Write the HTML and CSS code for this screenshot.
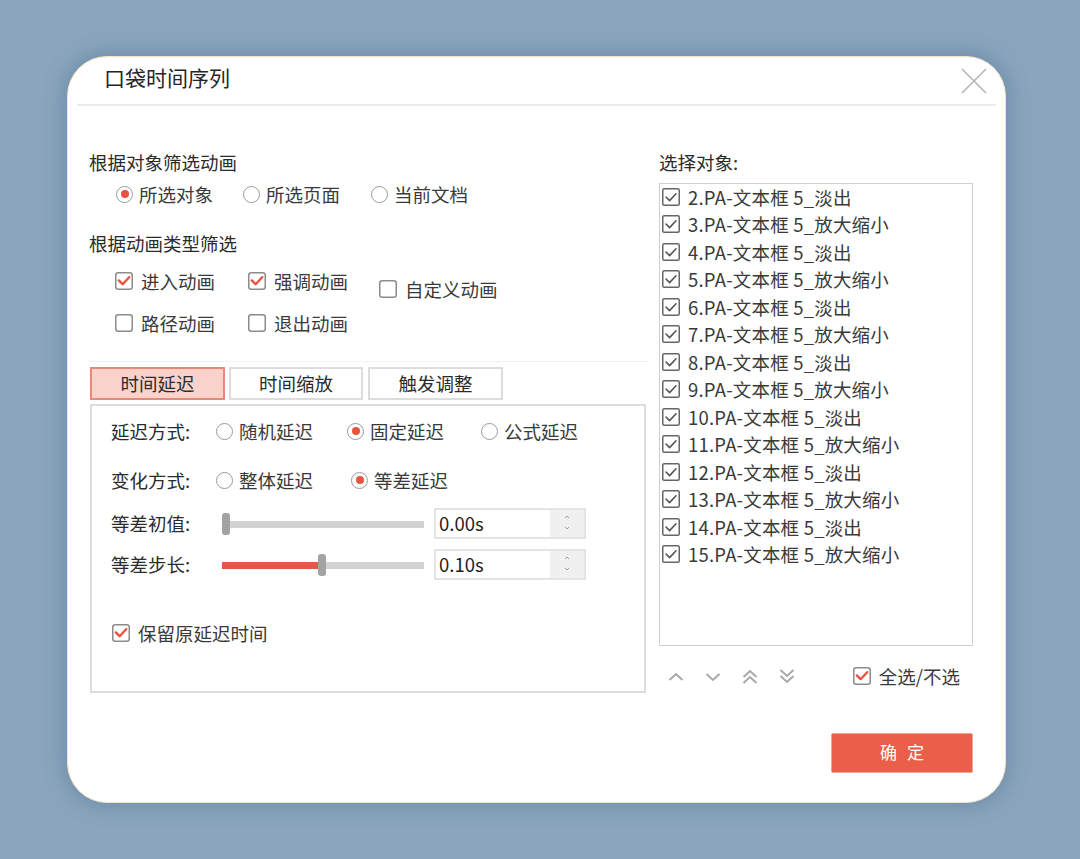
FILE: index.html
```html
<!DOCTYPE html>
<html lang="zh-CN">
<head>
<meta charset="utf-8">
<title>口袋时间序列</title>
<link rel="stylesheet" href="styles.css">
</head>
<body>
<svg class="defs" width="0" height="0" aria-hidden="true">
  <defs>
    <symbol id="cb-red" viewBox="0 0 18 18">
      <rect x="0.75" y="0.75" width="16.5" height="16.5" rx="2.5" fill="#fff" stroke="#8c8c8c" stroke-width="1.5"/>
      <polyline points="3.8,8.4 7.6,12.2 14.2,5.2" fill="none" stroke="#e8533f" stroke-width="2.4" stroke-linecap="round" stroke-linejoin="round"/>
    </symbol>
    <symbol id="cb-off" viewBox="0 0 18 18">
      <rect x="0.75" y="0.75" width="16.5" height="16.5" rx="2.5" fill="#fff" stroke="#8c8c8c" stroke-width="1.5"/>
    </symbol>
    <symbol id="cb-gray" viewBox="0 0 18 18">
      <rect x="0.75" y="0.75" width="16.5" height="16.5" rx="1.5" fill="#fff" stroke="#666" stroke-width="1.5"/>
      <polyline points="4,9 7.6,12.6 14,5.8" fill="none" stroke="#555" stroke-width="1.6" stroke-linecap="round" stroke-linejoin="round"/>
    </symbol>
  </defs>
</svg>

<div class="stage">
  <div class="dialog">
    <div class="header">
      <span class="title">口袋时间序列</span>
      <svg class="close" width="26" height="26" viewBox="0 0 26 26"><path d="M1 1 L25 25 M25 1 L1 25" stroke="#b4b4b4" stroke-width="1.6" fill="none"/></svg>
    </div>

    <div class="content">
      <div class="left">
        <div class="sec">根据对象筛选动画</div>
        <div class="row indent-r">
          <label class="opt w127"><span class="radio on"></span>所选对象</label>
          <label class="opt w128"><span class="radio"></span>所选页面</label>
          <label class="opt"><span class="radio"></span>当前文档</label>
        </div>

        <div class="sec sec2">根据动画类型筛选</div>
        <div class="row indent-c row-c1">
          <label class="opt w133"><svg class="cb"><use href="#cb-red"/></svg>进入动画</label>
          <label class="opt w131"><svg class="cb"><use href="#cb-red"/></svg>强调动画</label>
          <label class="opt low"><svg class="cb"><use href="#cb-off"/></svg>自定义动画</label>
        </div>
        <div class="row indent-c row-c2">
          <label class="opt w133"><svg class="cb"><use href="#cb-off"/></svg>路径动画</label>
          <label class="opt w131"><svg class="cb"><use href="#cb-off"/></svg>退出动画</label>
        </div>

        <div class="divider"></div>

        <div class="tabs">
          <div class="tab active">时间延迟</div>
          <div class="tab t2">时间缩放</div>
          <div class="tab t3">触发调整</div>
        </div>

        <div class="panel">
          <div class="prow">
            <span class="plabel">延迟方式:</span>
            <label class="opt w131"><span class="radio"></span>随机延迟</label>
            <label class="opt w134"><span class="radio on"></span>固定延迟</label>
            <label class="opt"><span class="radio"></span>公式延迟</label>
          </div>
          <div class="prow prow2">
            <span class="plabel">变化方式:</span>
            <label class="opt w135"><span class="radio"></span>整体延迟</label>
            <label class="opt"><span class="radio on"></span>等差延迟</label>
          </div>

          <div class="srow srow1">
            <span class="slabel">等差初值:</span>
            <div class="slider">
              <div class="fill" style="width:0px"></div>
              <div class="thumb"></div>
            </div>
            <div class="spin">
              <span class="val">0.00s</span>
              <span class="spinbtns">
                <svg width="8" height="5" viewBox="0 0 8 5"><path d="M2 4 L4 2 L6 4" stroke="#a0a0a0" stroke-width="1" fill="none"/></svg>
                <svg width="8" height="5" viewBox="0 0 8 5"><path d="M2 1 L4 3 L6 1" stroke="#a0a0a0" stroke-width="1" fill="none"/></svg>
              </span>
            </div>
          </div>
          <div class="srow srow2">
            <span class="slabel">等差步长:</span>
            <div class="slider">
              <div class="fill" style="width:96px"></div>
              <div class="thumb"></div>
            </div>
            <div class="spin">
              <span class="val">0.10s</span>
              <span class="spinbtns">
                <svg width="8" height="5" viewBox="0 0 8 5"><path d="M2 4 L4 2 L6 4" stroke="#a0a0a0" stroke-width="1" fill="none"/></svg>
                <svg width="8" height="5" viewBox="0 0 8 5"><path d="M2 1 L4 3 L6 1" stroke="#a0a0a0" stroke-width="1" fill="none"/></svg>
              </span>
            </div>
          </div>

          <div class="keep">
            <label class="opt"><svg class="cb"><use href="#cb-red"/></svg>保留原延迟时间</label>
          </div>
        </div>
      </div>

      <div class="right">
        <div class="sec">选择对象:</div>
        <div class="list">
          <div class="item"><svg class="cb"><use href="#cb-gray"/></svg>2.PA-文本框 5_淡出</div>
          <div class="item"><svg class="cb"><use href="#cb-gray"/></svg>3.PA-文本框 5_放大缩小</div>
          <div class="item"><svg class="cb"><use href="#cb-gray"/></svg>4.PA-文本框 5_淡出</div>
          <div class="item"><svg class="cb"><use href="#cb-gray"/></svg>5.PA-文本框 5_放大缩小</div>
          <div class="item"><svg class="cb"><use href="#cb-gray"/></svg>6.PA-文本框 5_淡出</div>
          <div class="item"><svg class="cb"><use href="#cb-gray"/></svg>7.PA-文本框 5_放大缩小</div>
          <div class="item"><svg class="cb"><use href="#cb-gray"/></svg>8.PA-文本框 5_淡出</div>
          <div class="item"><svg class="cb"><use href="#cb-gray"/></svg>9.PA-文本框 5_放大缩小</div>
          <div class="item"><svg class="cb"><use href="#cb-gray"/></svg>10.PA-文本框 5_淡出</div>
          <div class="item"><svg class="cb"><use href="#cb-gray"/></svg>11.PA-文本框 5_放大缩小</div>
          <div class="item"><svg class="cb"><use href="#cb-gray"/></svg>12.PA-文本框 5_淡出</div>
          <div class="item"><svg class="cb"><use href="#cb-gray"/></svg>13.PA-文本框 5_放大缩小</div>
          <div class="item"><svg class="cb"><use href="#cb-gray"/></svg>14.PA-文本框 5_淡出</div>
          <div class="item"><svg class="cb"><use href="#cb-gray"/></svg>15.PA-文本框 5_放大缩小</div>
        </div>

        <div class="tools">
          <div class="arrows">
            <svg width="16" height="20" viewBox="0 0 16 20"><path d="M1.5 13 L8 7 L14.5 13" stroke="#a8a8a8" stroke-width="2" fill="none"/></svg>
            <svg width="16" height="20" viewBox="0 0 16 20"><path d="M1.5 7 L8 13 L14.5 7" stroke="#a8a8a8" stroke-width="2" fill="none"/></svg>
            <svg width="16" height="20" viewBox="0 0 16 20"><path d="M1.5 10 L8 4 L14.5 10 M1.5 16 L8 10 L14.5 16" stroke="#a8a8a8" stroke-width="2" fill="none"/></svg>
            <svg width="16" height="20" viewBox="0 0 16 20"><path d="M1.5 3 L8 9 L14.5 3 M1.5 9 L8 15 L14.5 9" stroke="#a8a8a8" stroke-width="2" fill="none"/></svg>
          </div>
          <label class="opt all"><svg class="cb"><use href="#cb-red"/></svg>全选/不选</label>
        </div>

        <div class="btnrow">
          <button class="ok">确 定</button>
        </div>
      </div>
    </div>
  </div>
</div>
</body>
</html>
```

FILE: styles.css
```css
* { box-sizing: border-box; }

html, body {
  margin: 0;
  padding: 0;
}

body {
  background: #8aa5bd;
  width: 1080px;
  height: 859px;
  overflow: hidden;
  font-family: "Noto Sans CJK SC", "Noto Sans", sans-serif;
  color: #2b2b2b;
}

.defs { position: absolute; width: 0; height: 0; overflow: hidden; }

.stage {
  padding: 56px 0 0 67px;
}

.dialog {
  width: 939px;
  height: 747px;
  background: #fff;
  border: 1px solid #f1e2c8;
  border-radius: 40px;
  box-shadow: 0 0 18px 4px rgba(90, 125, 155, 0.55);
}

.header {
  height: 49px;
  margin: 0 9px;
  padding: 0 9px 0 27px;
  border-bottom: 2px solid #ececec;
  display: flex;
  align-items: center;
  justify-content: space-between;
}

.title {
  font-size: 21px;
  line-height: 26px;
  color: #262626;
  margin-top: -7px;
}

.close {
  display: block;
  margin-top: 0;
}

.content {
  display: flex;
  gap: 13px;
  padding: 43px 0 0 21px;
}

.left { width: 557px; }
.right { width: 314px; }

.sec {
  font-size: 18.5px;
  line-height: 26px;
  height: 26px;
  padding-bottom: 2px;
  color: #2b2b2b;
  white-space: nowrap;
}

.sec2 { margin-top: 22px; }

.row {
  display: flex;
  align-items: flex-start;
  height: 26px;
}

.indent-r { padding-left: 27px; margin-top: 7px; }
.indent-c { padding-left: 26px; }
.row-c1 { margin-top: 13px; }
.row-c2 { margin-top: 16px; }

.opt {
  display: flex;
  align-items: center;
  height: 26px;
  font-size: 18.5px;
  line-height: 26px;
  color: #3a3a3a;
  white-space: nowrap;
}

.opt, .plabel, .slabel, .item, .tab, .val { padding-bottom: 2px; }

.w127 { width: 127px; }
.w128 { width: 128px; }
.w131 { width: 131px; }
.w133 { width: 133px; }
.w134 { width: 134px; }
.w135 { width: 135px; }

.low { margin-top: 8px; }

.radio {
  width: 17px;
  height: 17px;
  border: 1.5px solid #9a9a9a;
  border-radius: 50%;
  margin-right: 6px;
  display: flex;
  align-items: center;
  justify-content: center;
  flex: none;
}

.radio.on::after {
  content: "";
  width: 8px;
  height: 8px;
  border-radius: 50%;
  background: #e8533f;
}

.cb {
  width: 18px;
  height: 18px;
  flex: none;
  margin-right: 8px;
}

.divider {
  margin-top: 24px;
  height: 1px;
  background: #f2f2f2;
  width: 560px;
}

.tabs {
  display: flex;
  margin-top: 5px;
  padding-left: 1px;
}

.tab {
  width: 135px;
  height: 33px;
  border: 2px solid #dcdcdc;
  font-size: 18.5px;
  line-height: 29px;
  text-align: center;
  color: #2b2b2b;
}

.tab.active {
  background: #f9d2cb;
  border-color: #e9887a;
}

.tab.t2 { width: 134px; margin-left: 4px; }
.tab.t3 { margin-left: 5px; }

.panel {
  margin-top: 4px;
  margin-left: 1px;
  width: 556px;
  height: 289px;
  border: 2px solid #dcdcdc;
  padding: 13px 0 0 19px;
}

.prow {
  display: flex;
  align-items: center;
  height: 26px;
}

.prow2 { margin-top: 23px; }

.plabel {
  width: 105px;
  font-size: 18.5px;
  line-height: 26px;
  color: #2b2b2b;
  flex: none;
}

.srow {
  display: flex;
  align-items: center;
  height: 31px;
}

.srow1 { margin-top: 14px; }
.srow2 { margin-top: 10px; }

.slabel {
  width: 111px;
  font-size: 18.5px;
  line-height: 26px;
  color: #2b2b2b;
  flex: none;
}

.slider {
  position: relative;
  width: 202px;
  height: 7px;
  background: #d3d3d3;
  display: flex;
  align-items: center;
  margin-top: 1px;
}

.fill {
  height: 7px;
  background: #e05a45;
}

.thumb {
  width: 8px;
  height: 22px;
  border-radius: 3px;
  background: #a3a3a3;
  flex: none;
}

.spin {
  margin-left: 10px;
  width: 152px;
  height: 31px;
  border: 2px solid #e4e4e4;
  display: flex;
  align-items: stretch;
}

.val {
  flex: 1;
  font-size: 18.5px;
  line-height: 27px;
  padding-left: 3px;
  color: #1e1e1e;
}

.spinbtns {
  width: 34px;
  background: #f0f0f0;
  display: flex;
  flex-direction: column;
  align-items: center;
  justify-content: space-between;
  padding: 4px 0 6px;
}

.spinbtns svg { display: block; }

.keep {
  margin-top: 41px;
  padding-left: 1px;
}

.list {
  margin-top: 8px;
  height: 463px;
  border: 1px solid #cfcfcf;
  padding: 0 0 0 2px;
}

.item {
  height: 27.5px;
  display: flex;
  align-items: center;
  font-size: 18.5px;
  line-height: 26px;
  color: #3a3a3a;
  white-space: nowrap;
  letter-spacing: 0.2px;
}

.tools {
  margin-top: 18px;
  height: 26px;
  display: flex;
  align-items: center;
  justify-content: space-between;
}

.arrows {
  display: flex;
  align-items: center;
  gap: 21px;
  padding-left: 9px;
}

.arrows svg { display: block; }

.all { margin-right: 13px; }

.btnrow {
  margin-top: 43px;
  display: flex;
  justify-content: flex-end;
}

.ok {
  width: 142px;
  height: 40px;
  border: 1px solid #f1a091;
  border-radius: 2px;
  background: #eb5f48;
  color: #fff;
  font-family: "Noto Sans CJK SC", sans-serif;
  font-size: 17px;
  letter-spacing: 3px;
  padding: 0 0 2px 3px;
  line-height: 36px;
}
```
